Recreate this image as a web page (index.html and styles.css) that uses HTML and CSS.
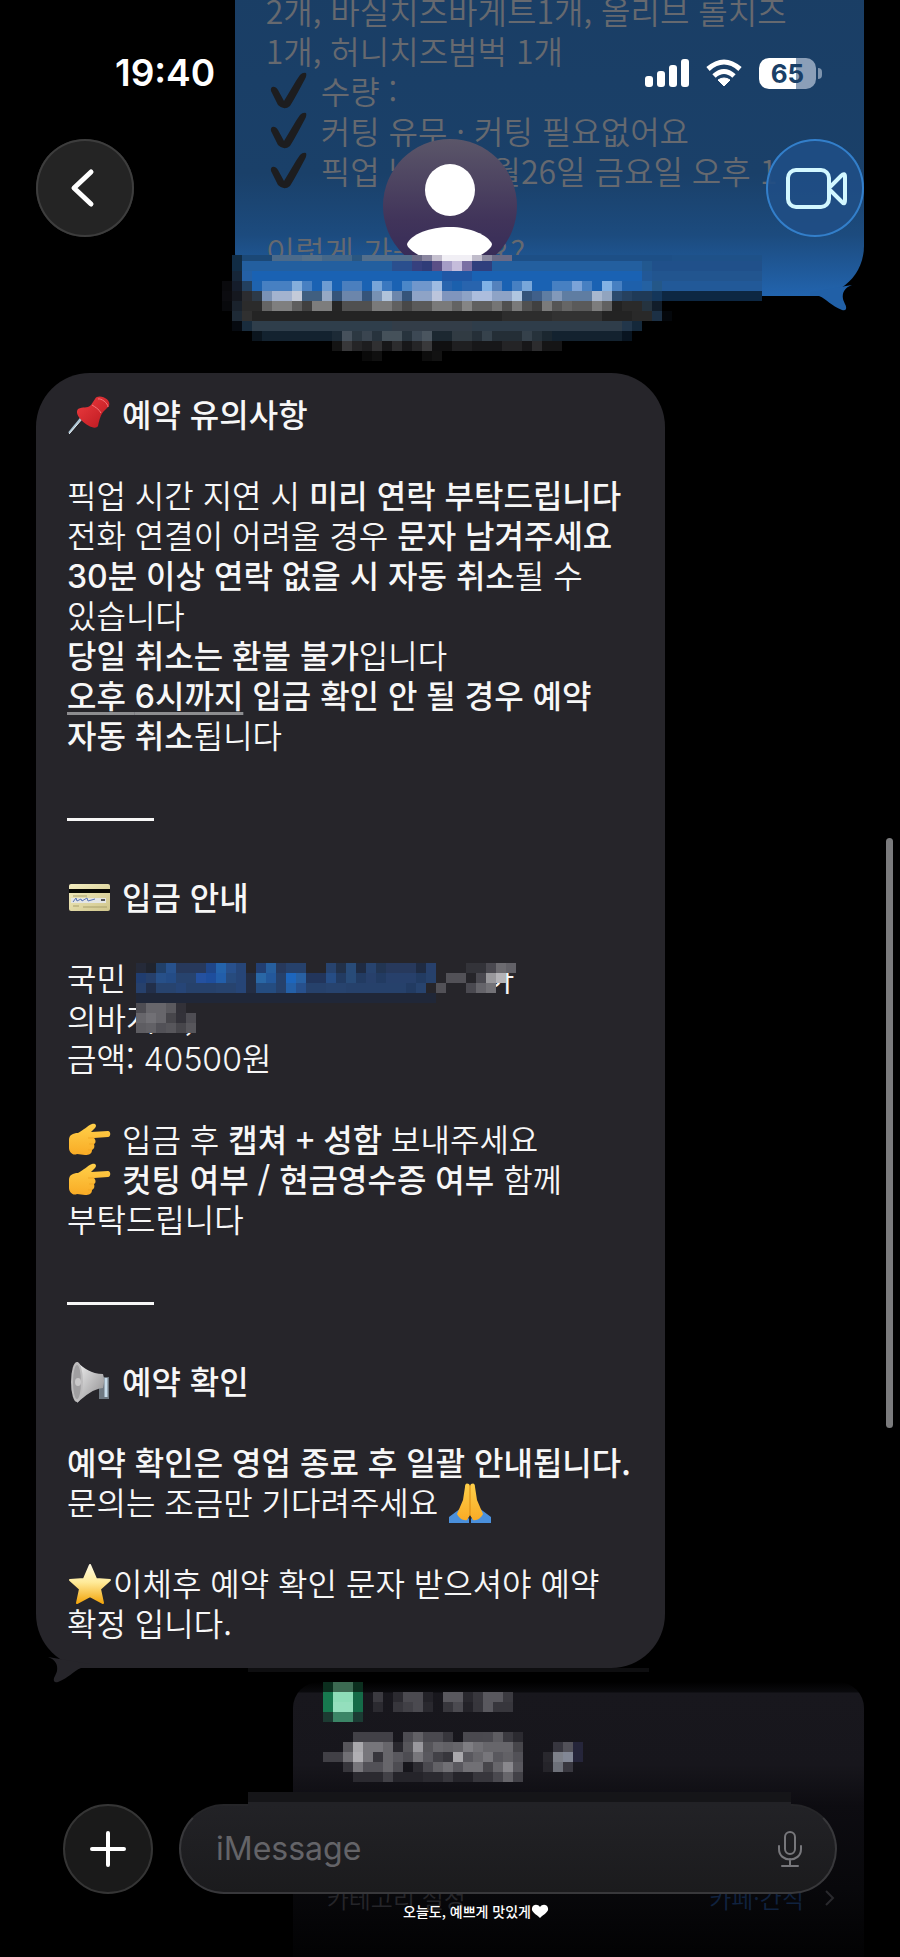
FILE: index.html
```html
<!DOCTYPE html>
<html lang="ko">
<head>
<meta charset="utf-8">
<meta name="viewport" content="width=device-width, initial-scale=1">
<title>iMessage</title>
<link rel="stylesheet" href="styles.css">
</head>
<body>
<svg class="sprite" aria-hidden="true">
  <defs>
    <linearGradient id="skin" x1="0" y1="0" x2="0" y2="1"><stop offset="0" stop-color="#ffd04a"/><stop offset="1" stop-color="#f9ab25"/></linearGradient>
    <linearGradient id="gold" x1="0" y1="0" x2="0" y2="1"><stop offset="0" stop-color="#fff9df"/><stop offset=".45" stop-color="#ffeb9a"/><stop offset="1" stop-color="#f3a60e"/></linearGradient>
    <linearGradient id="steel" x1="0" y1="0" x2="1" y2="1"><stop offset="0" stop-color="#f1f1f1"/><stop offset="1" stop-color="#8c8b8d"/></linearGradient>
    <linearGradient id="cardGold" x1="0" y1="0" x2="1" y2="1"><stop offset="0" stop-color="#f3edc0"/><stop offset="1" stop-color="#cfc58b"/></linearGradient>
    <linearGradient id="pinRed" x1="0" y1="0" x2="1" y2="1"><stop offset="0" stop-color="#ef3d40"/><stop offset="1" stop-color="#b9171f"/></linearGradient>
    <linearGradient id="avatarBg" x1="0" y1="0" x2="0" y2="1"><stop offset="0" stop-color="#5b5669"/><stop offset=".6" stop-color="#41345a"/><stop offset="1" stop-color="#332957"/></linearGradient>
  </defs>
  <symbol id="tick" viewBox="0 0 46 40">
    <path d="M5 19C4 14 9 13 12 18L18 29C24 19 29 10 34 3Q37 0 40 1Q41 3 39 7C34 16 29 26 24 34Q18 39 12 33Z" fill="#1d1d1f"/>
  </symbol>
  <symbol id="hand" viewBox="0 0 46 40">
    <path d="M2 20C2 15 6 13 11 13C17 10 20 6 25 4C29 3 30 6 28 8L24 12L41 11C44 11 44 17 41 17L27 18C29 20 29 23 27 24C28 27 27 29 25 30C25 34 22 35 18 35L10 34C6 36 2 32 2 28Z" fill="url(#skin)"/>
    <path d="M21 18L27 18M22 24L27 24M21 30L25 30" stroke="#f3a723" stroke-width="1" fill="none"/>
  </symbol>
</svg>

<div class="screen">
  <header class="topbar">
    <div class="status">
      <time class="clock">19:40</time>
      <div class="indicators">
        <svg width="44" height="30" viewBox="0 0 44 30" fill="#fff" role="img" aria-label="신호">
          <rect x="0" y="18" width="8" height="11" rx="3"/><rect x="12" y="13" width="8" height="16" rx="3"/><rect x="24" y="7" width="8" height="22" rx="3"/><rect x="36" y="1" width="8" height="28" rx="3"/>
        </svg>
        <svg width="38" height="30" viewBox="0 0 38 30" role="img" aria-label="Wi-Fi">
          <path d="M3 11Q19-3 35 11M9 18Q19 9 29 18" fill="none" stroke="#fff" stroke-width="5"/>
          <path d="M19 28L13 22Q19 18 25 22Z" fill="#fff" stroke="#fff" stroke-width="1" stroke-linejoin="round"/>
        </svg>
        <div class="battery"><span class="battery-level">65</span></div>
      </div>
    </div>
    <nav class="nav">
      <button class="round" aria-label="뒤로">
        <svg width="98" height="98" viewBox="0 0 98 98"><path d="M55 33L38 49L55 65" fill="none" stroke="#fff" stroke-width="5" stroke-linecap="round" stroke-linejoin="round"/></svg>
      </button>
      <svg class="avatar" viewBox="0 0 134 134" role="img" aria-label="프로필">
        <circle cx="67" cy="67" r="67" fill="url(#avatarBg)"/>
        <ellipse cx="67" cy="51" rx="25" ry="26" fill="#fff"/>
        <path d="M24 105C28 95 47 88 67 88C87 88 105 96 109 105C109 111 92 122 67 126C42 122 24 111 24 105Z" fill="#fff"/>
      </svg>
      <button class="round video" aria-label="영상 통화">
        <svg width="98" height="98" viewBox="0 0 98 98" fill="none" stroke="#d2f7ff" stroke-width="4" stroke-linejoin="round"><rect x="22" y="31" width="41" height="37" rx="8"/><path d="M64 48L75 37Q79 33 79 38V61Q79 67 75 62L64 51"/></svg>
      </button>
    </nav>
    <svg class="mosaic title-mosaic" data-mosaic="title" width="540" height="106" viewBox="0 4 540 106" aria-hidden="true"></svg>
  </header>

  <main class="thread">
    <article class="bubble sent">
      <p>2개, 바실치즈바게트1개, 올리브 롤치즈 1개, 허니치즈범벅 1개<br>
      <svg class="emoji"><use href="#tick"/></svg> 수량 :<br>
      <svg class="emoji"><use href="#tick"/></svg> 커팅 유무 · 커팅 필요없어요<br>
      <svg class="emoji"><use href="#tick"/></svg> 픽업 날짜 : 9월26일 금요일 오후 1</p>
      <p class="gap">이렇게 가능할까요?</p>
      <svg class="tail" width="48" height="30" viewBox="0 0 48 30"><path d="M2 10L44 3C36 6 34 11 35 17C36 21 39 24 38 27Q37 29 34 28C23 24 19 17 11 14L2 14Z" fill="#2160a7"/></svg>
    </article>

    <article class="bubble received">
      <p><svg class="emoji" viewBox="0 0 46 40"><path d="M2 38L20 16" stroke="#a9c3d3" stroke-width="2"/><path d="M2 39L16 23" stroke="#e9eef0" stroke-width="1"/><path d="M11 14C16 11 20 14 24 10L28 4C31-2 45 4 42 11L36 17C33 21 32 26 31 31C27 38 5 21 11 14Z" fill="url(#pinRed)"/><path d="M31 4C34 3 41 8 41 12M25 10C28 12 32 14 34 18" stroke="#f4767a" stroke-width="1" fill="none"/></svg> <b>예약 유의사항</b></p>

      <p class="gap">픽업 시간 지연 시 <b>미리 연락 부탁드립니다</b><br>
      전화 연결이 어려울 경우 <b>문자 남겨주세요</b><br>
      <b><span class="num">30</span>분 이상 연락 없을 시 자동 취소</b>될 수 있습니다<br>
      <b>당일 취소는 환불 불가</b>입니다<br>
      <b><span class="underlined">오후 <span class="num">6</span>시까지</span> 입금 확인 안 될 경우 예약 자동 취소</b>됩니다</p>

      <hr class="rule gap">

      <p class="gap"><svg class="emoji" viewBox="0 0 46 40"><rect x="2" y="6" width="41" height="27" rx="2" fill="url(#cardGold)"/><path d="M2 11H43V15H2Z" fill="#090905"/><path d="M4 20H39V25H4Z" fill="#e4e6e5"/><path d="M6 24L9 20L10 23L14 21L15 23L20 20L21 23L28 21" fill="none" stroke="#5a74b4" stroke-width="1"/><path d="M34 22H38" stroke="#555" stroke-width="2"/><path d="M6 18H20M6 28H12M16 29H40" stroke="#a9a06c" stroke-width="1"/></svg> <b>입금 안내</b></p>

      <div class="account gap">
        <p>국민 <span class="hidden-number"></span>아<br>의바게트,</p>
        <svg class="mosaic account-mosaic" data-mosaic="account" width="380" height="70" aria-hidden="true"></svg>
      </div>
      <p>금액: <span class="num">40500</span>원</p>

      <p class="gap"><svg class="emoji"><use href="#hand"/></svg> 입금 후 <b>캡쳐 + 성함</b> 보내주세요<br>
      <svg class="emoji"><use href="#hand"/></svg> <b>컷팅 여부 / 현금영수증 여부</b> 함께 부탁드립니다</p>

      <hr class="rule gap">

      <p class="gap"><svg class="emoji" viewBox="0 0 46 40"><path d="M31 15H42V37H32V23H31Z" fill="#6f7982"/><path d="M39 16V35" stroke="#c8dcea" stroke-width="3"/><path d="M10 0C17 6 24 12 36 12Q38 18 36 26C26 27 19 33 10 41Z" fill="url(#steel)"/><ellipse cx="10" cy="20" rx="6" ry="20" fill="#bdbcbd"/><ellipse cx="10" cy="20" rx="4" ry="17" fill="#a09fa1"/><ellipse cx="11" cy="20" rx="3" ry="4" fill="#c9c8c9"/></svg> <b>예약 확인</b></p>

      <p class="gap"><b>예약 확인은 영업 종료 후 일괄 안내됩니다.</b><br>
      문의는 조금만 기다려주세요 <svg class="emoji" viewBox="0 0 46 40"><path d="M2 40V34L14 25L22 36V40ZM44 40V34L32 25L24 36V40Z" fill="#4a90dc"/><path d="M22 1Q18-1 18 4L16 17L10 31C12 35 16 38 20 37L23 32L26 37C30 38 34 35 36 31L30 17L28 4Q28-1 24 1L23 3Z" fill="url(#skin)"/><path d="M23 2V32" stroke="#d98a12" stroke-width="1"/></svg></p>

      <p class="gap"><svg class="emoji" viewBox="0 0 46 40"><path d="M23 1L29 15L43 16L33 25L36 39L23 32L10 39L13 25L3 16L17 15Z" fill="url(#gold)" stroke="url(#gold)" stroke-width="2" stroke-linejoin="round"/></svg>이체후 예약 확인 문자 받으셔야 예약 확정 입니다.</p>
      <svg class="tail" width="48" height="30" viewBox="0 0 48 30"><path d="M2 10L44 3C36 6 34 11 35 17C36 21 39 24 38 27Q37 29 34 28C23 24 19 17 11 14L2 14Z" fill="#26252a"/></svg>
    </article>

    <article class="preview">
      <svg class="mosaic" data-mosaic="preview" width="540" height="130" aria-hidden="true"></svg>
      <div class="preview-row">
        <span>카테고리 설정</span>
        <a href="#category">카페·간식<svg width="12" height="18" viewBox="0 0 12 18"><path d="M2 2L9 9L2 16" fill="none" stroke="#29292d" stroke-width="2"/></svg></a>
      </div>
    </article>
  </main>

  <footer class="bottom">
    <form class="composer">
      <button class="plus" type="button" aria-label="추가"><svg width="36" height="36" viewBox="0 0 36 36"><path d="M18 2V34M2 18H34" stroke="#fff" stroke-width="4" stroke-linecap="round"/></svg></button>
      <div class="field">
        <input type="text" placeholder="iMessage" aria-label="iMessage">
        <button class="mic" type="button" aria-label="받아쓰기"><svg width="24" height="36" viewBox="0 0 24 36" fill="none" stroke="#77777b" stroke-width="2" stroke-linecap="round"><rect x="7" y="1" width="10" height="22" rx="5"/><path d="M1 15V18C1 32 23 32 23 18V15M12 28V34M4 35H20"/></svg></button>
      </div>
    </form>
    <p class="caption">오늘도, 예쁘게 맛있게<svg width="18" height="14" viewBox="0 0 18 14"><path d="M9 14C5 10 0 8 1 4C2 0 7 0 9 3C11 0 16 0 17 4C18 8 13 10 9 14Z" fill="#fff"/></svg></p>
  </footer>
  <div class="scroll-thumb"></div>
</div>
<script src="mosaic.js"></script>
</body>
</html>
```
FILE: styles.css
```css
* { box-sizing: border-box; }

body {
  margin: 0;
  background: #000;
  color: #f7f7f7;
  font-family: "Noto Sans CJK KR", "Noto Sans", sans-serif;
  font-size: 32px;
  font-weight: 350;
  line-height: 40px;
  word-break: keep-all;
}

p { margin: 0; }
b { font-weight: 500; }
button { padding: 0; border: 0; background: none; font: inherit; color: inherit; }
.sprite { position: absolute; width: 0; height: 0; }
.num { font-family: Inter, sans-serif; line-height: 1; }

.screen { position: relative; min-height: 100vh; overflow: hidden; }

/* Top bar */
.topbar { position: absolute; z-index: 2; top: 0; left: 0; right: 0; }
.status {
  display: flex;
  justify-content: space-between;
  align-items: center;
  padding: 50px 84px 43px 115px;
  line-height: 46px;
}
.clock { font: 600 37px/46px Inter, sans-serif; color: #fff; }
.indicators { display: flex; align-items: center; gap: 16px; }
.battery {
  position: relative;
  width: 57px;
  height: 31px;
  border-radius: 10px;
  background: linear-gradient(90deg, #fff 65%, #8b9fb8 65%);
  color: #1a3f67;
  font: 700 26px/31px Inter, sans-serif;
  text-align: center;
}
.battery::after {
  content: "";
  position: absolute;
  left: 59px;
  top: 10px;
  width: 4px;
  height: 11px;
  border-radius: 0 4px 4px 0;
  background: #7e94ae;
}
.nav {
  display: flex;
  justify-content: space-between;
  align-items: flex-start;
  padding: 0 36px;
}
.round {
  width: 98px;
  height: 98px;
  border-radius: 50%;
  background: #242424;
  box-shadow: inset 0 0 0 2px #3d3d3d;
}
.round svg { display: block; }
.video { background: rgba(31, 78, 132, .93); box-shadow: inset 0 0 0 2px #337fca; }
.avatar { width: 134px; height: 134px; }
.mosaic { display: block; shape-rendering: crispEdges; }
.title-mosaic { position: absolute; top: 255px; left: calc(50% - 228px); }

/* Conversation */
.thread { display: flex; flex-direction: column; padding: 0 36px; }
.bubble { position: relative; width: 76%; padding: 20px 30px 26px 31px; }
.sent {
  align-self: flex-end;
  margin-top: -10px;
  padding-top: 0;
  border-radius: 0 0 50px 44px;
  background: linear-gradient(180deg, #1a3e65 0, #1a4069 60%, #1c4b7e 80%, #2264ae 100%);
  color: #66696f;
}
.received { margin-top: 77px; border-radius: 54px; background: #26252a; }
.received::after {
  content: "";
  position: absolute;
  top: 100%;
  left: 212px;
  right: 16px;
  height: 4px;
  background: #0e0e10;
}
.gap { margin-top: 41px; }
.sent .gap { margin-top: 40px; }
.emoji { width: 46px; height: 40px; margin: 2px 0 -2px; vertical-align: top; overflow: visible; }
.underlined {
  text-decoration: underline #8d8d90 3px;
  text-underline-offset: 4px;
  text-decoration-skip-ink: none;
}
.rule {
  width: 87px;
  height: 40px;
  margin: 41px 0 0;
  border: 0;
  background: linear-gradient(#f7f7f7, #f7f7f7) 0 23px / 87px 3px no-repeat;
}
.account { position: relative; }
.account-mosaic { position: absolute; top: 6px; left: 69px; }
.hidden-number { display: inline-block; width: 350px; }
.tail { position: absolute; bottom: -16px; }
.sent .tail { right: 8px; }
.received .tail { left: 8px; transform: scaleX(-1); }

/* Link preview behind the composer */
.preview {
  align-self: flex-end;
  width: 69%;
  min-height: 275px;
  margin-top: 14px;
  background: linear-gradient(180deg, #000 0, #0a0a0d 10px, #18171d 11px, #17161c 30%, #0d0c11 45%, #08080b 75%, #020203 100%);
  border-radius: 26px 26px 0 0;
}
.preview-row {
  display: flex;
  justify-content: space-between;
  padding: 66px 28px 0 34px;
  color: #252529;
  font-size: 24px;
}
.preview-row a { display: flex; align-items: center; gap: 20px; color: #10223f; text-decoration: none; }

/* Composer */
.bottom { position: absolute; z-index: 2; left: 0; right: 0; bottom: 34px; }
.composer { display: flex; gap: 26px; padding: 0 63px; }
.plus {
  display: grid;
  place-items: center;
  flex: none;
  width: 90px;
  height: 90px;
  border: 2px solid #353535;
  border-radius: 50%;
  background: #1a1a1a;
}
.field {
  position: relative;
  display: flex;
  flex: 1;
  height: 90px;
  padding: 0 33px 0 35px;
  border: 2px solid #38383b;
  border-top-color: #252528;
  border-radius: 45px;
  background: linear-gradient(180deg, #222226, #1b1b1d);
}
.field::before {
  content: "";
  position: absolute;
  top: -14px;
  left: 67px;
  right: 44px;
  height: 14px;
  background: linear-gradient(180deg, #151518 10px, #222226 10px);
}
.field input {
  flex: 1;
  min-width: 0;
  padding: 0;
  border: 0;
  outline: 0;
  background: none;
  color: #f7f7f7;
  font: 400 32px/40px Inter, sans-serif;
}
.field input::placeholder { color: #646468; opacity: 1; }
.mic { display: grid; place-items: center; }
.caption {
  display: flex;
  justify-content: center;
  align-items: center;
  margin-top: 5px;
  padding-left: 52px;
  color: #fff;
  font-size: 14px;
  font-weight: 500;
  line-height: 24px;
}

.scroll-thumb {
  position: absolute;
  z-index: 3;
  top: 838px;
  right: 7px;
  width: 7px;
  height: 590px;
  border-radius: 4px;
  background: #7b7b7d;
}
```
FILE: mosaic.js
```javascript
// Each row is a list of runs, "count:colour"; "-" leaves the cells clear.
const MOSAICS = {
  title: {
    cell: 10,
    rows: [
      "1:- 1:112c44 3:1b4876 3:4b6a8a 2:546f89 3:446789 1:2a5680 5:536f8c 1:6a6985 1:8a86a0 1:c5c0cf 3:f1eff5 1:c0bccb 1:8c8aa0 2:6a6a85 16:1d4f86 9:1e5188",
      "1:- 1:112c44 15:235f9f 2:2a4f8e 1:36407e 1:2f3c78 1:5a4f86 1:a59cc6 1:c5bcdb 1:7a6fa3 2:2f3f7d 15:235f9f 1:22588f 11:20508a",
      "1:- 1:162638 1:2460a5 19:1a62b3 3:1f57a5 17:1a62b3 1:225896 11:22558f",
      "1:0a0a0d 1:151d2b 1:23405f 1:1e63b0 3:4780c2 1:84aedb 1:4780c2 1:1a62b3 1:6d9cd2 1:1a62b3 2:4b7fbe 1:1a62b3 1:78a5d8 1:3a78c0 1:1a62b3 1:4b87c8 2:7097cc 1:9ebbe2 1:2864ae 1:1b60ad 2:2864ae 1:80b2e6 1:5482bd 1:1a62b3 1:4780c2 1:78a7da 2:1a62b3 2:4780c2 1:7ba3d8 1:4780c2 1:1a62b3 1:83b2e4 1:4780c2 2:1e60ab 1:2461a2 1:245788 10:225998",
      "1:0c0c10 1:15181f 1:2b2c30 1:2d3a48 1:7a92b5 2:a3b3cf 1:c3cad8 2:405f80 1:96a9c4 1:35547a 2:6c86ab 1:35547a 1:7791b3 1:b0c3da 1:6c86ab 1:35547a 2:8ea3c6 1:bcc5dc 2:8095bd 1:8ea3c6 2:acbddd 2:8ea3c6 1:b0c6e0 1:35547a 1:40608a 1:5f7da2 1:8299ba 3:5f7da2 1:a8b7ce 1:91a4bf 1:2b4a6d 1:26415f 2:1f3a57 1:14365a 10:0d2742",
      "1:08090c 1:1a222c 2:2b2b2b 1:656565 2:7f7f7f 1:5e5e5e 1:404040 2:7d7d7d 1:252525 3:505050 2:7a7a7a 1:606060 1:484848 2:5a5a5a 2:7a7a7a 1:636363 1:858585 2:606060 1:757575 1:505050 1:7a7a7a 1:505050 1:404040 1:7b7b7b 1:555 1:666 2:5a5a5a 1:7d7d7d 1:616161 1:222222 2:2a2a2a 1:25333f 1:111d2a",
      "1:- 1:1e2a36 1:303030 25:242424 5:2d2d2d 5:323232 3:232323 2:292929 1:1c3045 1:04070b",
      "1:- 1:060a10 1:192c3d 14:2f3e4b 8:333d48 15:2f3d4a 1:22364a 1:14283a",
      "3:- 1:0b151e 7:13222f 1:1c2a36 1:46515c 1:2c3842 1:3a4550 1:27333d 2:45515a 1:27333d 1:3c4854 1:4a555f 2:1c2831 2:313b43 1:252f38 1:36424c 3:242e36 1:35414b 1:26323b 1:1b2730 7:13222f 1:081420",
      "11:- 1:141414 1:38383a 1:252527 1:1d1d1f 1:303032 1:171719 1:2c2c2e 1:171719 1:252527 1:39393b 2:101011 2:1f1f21 3:171719 2:242426 1:171719 1:2c2c2e 2:151516",
      "14:- 1:0a0a0a 1:101010 4:- 1:0d0d0d 1:121212"
    ]
  },
  account: {
    cell: 10,
    rows: [
      "1:252a39 1:20242e 1:214069 1:27518c 3:27395c 1:1f4688 1:2463ab 1:28508c 1:264577 1:- 1:223f72 1:265e9d 1:27395c 2:26416b 2:- 1:27436e 1:223149 1:284b78 1:1f2b42 1:27436e 1:223552 3:27395c 1:1f2b42 1:27406b 3:- 2:333339 1:4a4950 1:6c6b70 1:626167",
      "1:203d70 1:26406c 1:275089 1:244c86 2:27436e 1:2451a0 1:1e4e9d 1:225eaa 1:274b7e 1:264577 1:232d43 1:2967a6 1:23589b 1:26416b 1:1d66bd 1:2860a2 2:22355b 1:264d85 1:223b62 1:284b78 1:223b62 1:27406b 1:223b62 3:27406b 1:223b62 1:26416b 1:- 2:525157 1:- 1:4a4950 1:99989c 1:b4b3b7",
      "1:26406c 1:222f4a 2:27436e 1:264577 3:26416b 2:27436e 1:264577 1:232d43 2:244c80 1:26416b 1:2460a8 1:27508c 2:26416b 2:27436e 6:26416b 1:223b62 1:27436e 1:- 1:525157 2:- 1:4a4950 1:65646a 1:737277",
      "30:202738",
      "1:4e4d53 1:67666b 1:67666b 1:5a595e 1:323138 1:-",
      "1:67666b 1:717075 1:67666b 1:47464b 1:333239 1:4e4d53",
      "1:5e5d62 1:626166 1:525157 1:57565b 1:47464b 1:57565b"
    ]
  },
  preview: {
    cell: 10,
    rows: [
      "3:- 1:0b2e1e 2:3c6a52 1:0b2e1e",
      "3:- 1:17794f 2:8dddb8 1:156b48 1:- 1:3b3a40 1:- 1:2b2a30 2:4b4a50 1:232228 1:- 2:59585e 1:29282e 1:38373d 2:59585e 1:3b3a40",
      "3:- 1:17794f 2:94dfbd 1:156b48 1:- 1:2b2a30 1:- 1:37363c 1:414046 1:4b4a50 1:29282e 1:- 1:37363c 1:4b4a50 1:232228 1:37363c 1:59585e 2:37363c",
      "3:- 1:1c3b32 2:3b8566 1:1b3b33",
      "1:-",
      "6:- 4:424147 1:- 1:4d4c52 1:626166 2:4a494f 1:37363c 1:- 2:4a494f 1:4b4a50 1:5e5d62 1:3b3a40 1:2b2a30",
      "5:- 1:57565b 1:a9a8ac 2:77767b 1:67666b 1:29282e 1:57565b 1:99989d 1:56555a 1:67666b 1:626166 1:67666b 1:7f7e83 1:717075 3:67666b 1:47464b 3:- 1:37363f 1:525159 1:25253a",
      "3:- 2:414046 1:717075 1:b0afb3 1:77767b 1:37363c 1:67666b 1:59585e 1:4d4c52 1:77767b 1:59585e 1:424147 1:37363c 1:a9a8ac 1:59585e 1:67666b 1:77767b 1:59585e 1:626166 1:525157 2:- 1:29282e 1:7d8089 1:828795 1:25253a",
      "5:- 1:37363c 1:77767b 2:525157 1:67666b 1:4d4c52 1:- 1:2d2c32 1:4a494f 1:626166 1:717075 1:59585e 2:717075 1:47464b 1:67666b 1:89888d 1:59585e 2:- 1:25242a 1:6d7079 1:38373f",
      "6:- 3:2b2a30 1:424147 3:25242a 2:2b2a30 1:37363c 2:25242a 2:37363c 1:4a494f 1:67666b 1:424147"
    ]
  }
};

document.querySelectorAll("[data-mosaic]").forEach((svg) => {
  const { cell, rows } = MOSAICS[svg.dataset.mosaic];
  rows.forEach((row, y) => {
    let x = 0;
    row.split(" ").forEach((run) => {
      const [count, color] = run.split(":");
      const n = Number(count);
      if (color !== "-") {
        const rect = document.createElementNS("http://www.w3.org/2000/svg", "rect");
        rect.setAttribute("x", x * cell);
        rect.setAttribute("y", y * cell);
        rect.setAttribute("width", n * cell);
        rect.setAttribute("height", cell);
        rect.setAttribute("fill", "#" + color);
        svg.appendChild(rect);
      }
      x += n;
    });
  });
});
```
